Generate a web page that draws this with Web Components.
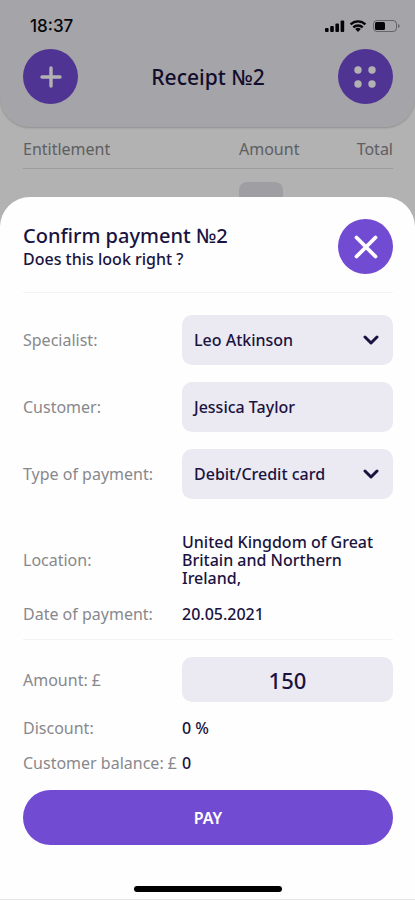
<!DOCTYPE html>
<html lang="en">
<head>
<meta charset="utf-8">
<meta name="viewport" content="width=device-width, initial-scale=1">
<title>Confirm payment</title>
<style>
  body {
    margin: 0;
    --violet: #724bd3;
    --ink: #1a1340;
    --muted: #88888c;
    --field: #ebe9f1;
    --line: #f3f3f4;
    color: var(--ink);
    font-family: "Noto Sans", "Open Sans", sans-serif;
    font-size: 16px;
    line-height: 18px;
  }
</style>
</head>
<body>
<payment-app></payment-app>

<script>
const define = (name, html, setup) => {
  const template = document.createElement('template');
  template.innerHTML = html;
  customElements.define(name, class extends HTMLElement {
    constructor() {
      super();
      this.attachShadow({ mode: 'open' }).append(template.content.cloneNode(true));
    }
    connectedCallback() { if (setup) setup(this, this.shadowRoot); }
  });
};

define('round-button', `
  <style>
    :host { display: block; flex: none; }
    button { display: grid; place-items: center; width: 55px; height: 55px; padding: 0; border: 0; border-radius: 50%; background: var(--violet); color: #fff; }
  </style>
  <button type="button"><slot></slot></button>
`, (host, root) => root.querySelector('button').setAttribute('aria-label', host.getAttribute('label')));

define('status-bar', `
  <style>
    :host { display: flex; justify-content: space-between; align-items: center; height: 20px; padding: 0 14px 0 30px; color: #08080c; font: 500 17px/20px Inter, "Liberation Sans", sans-serif; }
    svg { display: block; }
  </style>
  <span>18:37</span>
  <svg width="77" height="14" viewBox="0 0 77 14" role="img" aria-label="Signal, Wi-Fi, battery">
    <g fill="currentColor">
      <rect x="1" y="9" width="3.6" height="4" rx="1"/><rect x="6.200" y="7" width="3.600" height="6" rx="1"/>
      <rect x="11.400" y="4.500" width="3.600" height="8.500" rx="1"/><rect x="16.600" y="1.500" width="3.600" height="11.500" rx="1"/>
      <path d="M34 13l-2.800-2.900a4 4 0 0 1 5.600 0z"/>
    </g>
    <g fill="none" stroke="currentColor" stroke-width="2.300"><path d="M29.300 8.400a6.800 6.800 0 0 1 9.400 0M26.600 5.400a10.600 10.600 0 0 1 14.800 0"/></g>
    <rect x="49.500" y="1.500" width="23" height="11" rx="3.500" fill="none" stroke="currentColor" stroke-opacity=".4"/>
    <rect x="51" y="3" width="10" height="8" rx="1.500" fill="currentColor"/>
    <path d="M74 5v4q1.700-.6 1.700-2T74 5z" fill="currentColor" fill-opacity=".4"/>
  </svg>
`);

define('receipt-screen', `
  <style>
    :host { display: block; background: #fff; }
    header { padding: 16px 0 23px; border-radius: 0 0 30px 30px; background: #edecf3; box-shadow: 0 1px 2px #0003; }
    .bar { display: flex; align-items: center; justify-content: space-between; padding: 13px 22px 0 23px; }
    h1 { margin: 0; font-size: 21px; line-height: 24px; font-weight: 500; }
    .list { padding: 2px 22px 0 23px; }
    table { width: 100%; border-collapse: collapse; table-layout: fixed; }
    th { height: 39px; padding: 0; border-bottom: 1px solid #dedee0; color: var(--muted); font-weight: 400; text-align: left; }
    th:nth-child(2) { width: 62px; }
    th:last-child { width: 92px; text-align: right; }
    td { padding: 13px 0; }
    td:last-child { text-align: right; }
    td span { display: block; width: 44px; height: 34px; border-radius: 8px; background: #e4e3ea; text-align: center; line-height: 36px; }
  </style>
  <header>
    <status-bar></status-bar>
    <div class="bar">
      <round-button label="Add"><svg width="22" height="22" viewBox="0 0 22 22" fill="none" stroke="currentColor" stroke-width="3.400" stroke-linecap="round"><path d="M11 2v18M2 11h18"/></svg></round-button>
      <h1>Receipt №2</h1>
      <round-button label="Menu"><svg width="22" height="22" viewBox="0 0 22 22" fill="currentColor"><circle cx="4" cy="4" r="3.700"/><circle cx="18" cy="4" r="3.700"/><circle cx="4" cy="18" r="3.700"/><circle cx="18" cy="18" r="3.700"/></svg></round-button>
    </div>
  </header>
  <div class="list">
    <table>
      <thead><tr><th>Entitlement</th><th>Amount</th><th>Total</th></tr></thead>
      <tbody><tr><td></td><td><span></span></td><td></td></tr></tbody>
    </table>
  </div>
`);

define('form-row', `
  <style>
    :host { display: grid; grid-template-columns: 159px minmax(0, 1fr); align-items: center; }
    label { color: var(--muted); white-space: nowrap; }
    .value { font-weight: 500; }
    .box { display: grid; align-items: center; }
    input, select { grid-area: 1 / 1; box-sizing: border-box; width: 100%; height: 50px; margin: 0; padding: 0 12px; border: 0; border-radius: 10px; background: var(--field); color: inherit; font: inherit; font-weight: 500; appearance: none; }
    input { padding: 0 10px; text-indent: 2px; }
    :host([kind="amount"]) input { height: 45px; text-align: center; text-indent: 0; font-size: 22px; }
    svg { grid-area: 1 / 1; justify-self: end; margin-right: 14px; pointer-events: none; }
  </style>
  <label for="value"></label>
`, (host, root) => {
  const label = root.querySelector('label');
  if (root.children.length > 2) return;
  label.textContent = host.getAttribute('label');
  const kind = host.getAttribute('kind');
  const value = host.getAttribute('value');
  const box = document.createElement('div');
  box.className = 'box';
  if (kind === 'select') {
    box.innerHTML = '<select id="value"><option></option></select><svg width="16" height="12" viewBox="0 0 16 12" fill="none" stroke="currentColor" stroke-width="3" stroke-linecap="round" stroke-linejoin="round"><path d="M2 3l6 6 6-6"/></svg>';
    box.querySelector('option').textContent = value;
  } else if (kind) {
    box.innerHTML = '<input id="value" type="text">';
    box.firstChild.value = value;
  } else {
    box.innerHTML = '<output id="value" class="value"></output>';
    box.firstChild.textContent = value;
  }
  root.append(box);
});

define('payment-sheet', `
  <style>
    :host { display: block; padding: 22px 22px 7px 23px; border-radius: 30px 30px 0 0; border-bottom: 1px solid #e6e6e6; background: #fefefe; }
    header { display: flex; justify-content: space-between; align-items: center; padding-bottom: 18px; border-bottom: 1px solid var(--line); }
    hgroup { display: grid; gap: 2px; margin-bottom: 2px; }
    h2 { margin: 0; font-size: 20px; line-height: 24px; font-weight: 500; }
    p { margin: 0; font-size: 16px; font-weight: 500; }
    section { display: grid; }
    .fields { gap: 17px; padding-top: 22px; }
    .facts { gap: 18px; padding: 34px 0 16px; border-bottom: 1px solid var(--line); }
    .sums { gap: 17px; padding: 17px 0 18px; }
    .pay { display: block; width: 100%; height: 55px; padding: 0; border: 0; border-radius: 28px; background: var(--violet); color: #fff; font: inherit; font-weight: 600; }
    .home { width: 148px; height: 6px; margin: 41px auto 0; border-radius: 3px; background: #000; }
  </style>
  <header>
    <hgroup><h2>Confirm payment №2</h2><p>Does this look right ?</p></hgroup>
    <round-button label="Close"><svg width="24" height="24" viewBox="0 0 24 24" fill="none" stroke="currentColor" stroke-width="3.800" stroke-linecap="round"><path d="M2.500 2.500l19 19M21.500 2.500l-19 19"/></svg></round-button>
  </header>
  <section class="fields">
    <form-row kind="select" label="Specialist:" value="Leo Atkinson"></form-row>
    <form-row kind="text" label="Customer:" value="Jessica Taylor"></form-row>
    <form-row kind="select" label="Type of payment:" value="Debit/Credit card"></form-row>
  </section>
  <section class="facts">
    <form-row label="Location:" value="United Kingdom of Great Britain and Northern Ireland,"></form-row>
    <form-row label="Date of payment:" value="20.05.2021"></form-row>
  </section>
  <section class="sums">
    <form-row kind="amount" label="Amount: £" value="150"></form-row>
    <form-row label="Discount:" value="0 %"></form-row>
    <form-row label="Customer balance: £" value="0"></form-row>
  </section>
  <button class="pay" type="button">PAY</button>
  <div class="home"></div>
`);

define('payment-app', `
  <style>
    :host { display: grid; min-height: 100vh; }
    receipt-screen, .scrim, payment-sheet { grid-area: 1 / 1; min-width: 0; }
    .scrim { position: relative; background: #0000004d; }
    payment-sheet { position: relative; align-self: end; }
  </style>
  <receipt-screen></receipt-screen>
  <div class="scrim"></div>
  <payment-sheet role="dialog" aria-label="Confirm payment"></payment-sheet>
`);
</script>
</body>
</html>
